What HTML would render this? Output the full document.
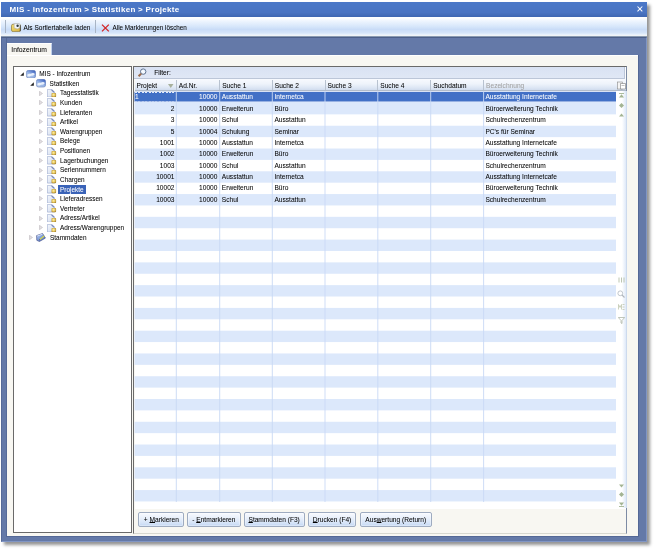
<!DOCTYPE html>
<html><head><meta charset="utf-8">
<style>
*{margin:0;padding:0;box-sizing:border-box}
html,body{width:656px;height:550px;overflow:hidden;background:#fff}
body{position:relative;font-family:"Liberation Sans",sans-serif;color:#000}
.a{position:absolute}
.t{position:absolute;white-space:nowrap;font-size:6.6px;line-height:8px;-webkit-text-stroke:0.04px currentColor}
#root{position:absolute;left:0;top:0;width:656px;height:550px;will-change:transform}
#win{position:absolute;left:1px;top:2px;width:646px;height:539.7px;box-shadow:3px 3px 3px rgba(0,0,0,.42);background:#6479a8}
</style></head><body><div id="root">

<svg width="0" height="0" style="position:absolute"><defs><linearGradient id="gp" x1="0" y1="0" x2="1" y2="1"><stop offset="0" stop-color="#f4f7fc"/><stop offset=".6" stop-color="#dfe6f3"/><stop offset="1" stop-color="#b9c6e0"/></linearGradient><radialGradient id="gy" cx=".45" cy=".45" r=".6"><stop offset="0" stop-color="#fff6b0"/><stop offset=".5" stop-color="#e8c860"/><stop offset="1" stop-color="#a88430"/></radialGradient><linearGradient id="gd" x1="0" y1="1" x2=".8" y2="0"><stop offset="0" stop-color="#c4d2ea"/><stop offset=".5" stop-color="#9ab6e6"/><stop offset="1" stop-color="#3c62c0"/></linearGradient><linearGradient id="gs" x1="0" y1="0" x2="1" y2="1"><stop offset="0" stop-color="#b8d0f4"/><stop offset="1" stop-color="#4a6ac0"/></linearGradient></defs></svg>
<div id="win"></div>
<div class="a" style="left:1px;top:37px;width:646px;height:504.7px;border:1px solid #566a98;border-right-color:#8196c4;border-bottom-color:#8196c4;border-top-color:#4d5f88"></div>
<div class="a" style="left:1px;top:2px;width:646px;height:15px;background:linear-gradient(#4b78c8,#4a74c2 70%,#3f67b2)"></div>
<div class="t" style="left:9.6px;top:4.8px;font-size:8px;font-weight:bold;color:#fff;line-height:10px;letter-spacing:0.3px;-webkit-text-stroke:0">MIS - Infozentrum &gt; Statistiken &gt; Projekte</div>
<svg class="a" style="left:636.6px;top:6.3px" width="6" height="6" viewBox="0 0 6 6"><path d="M0.5 0.5L5.3 5.3M5.3 0.5L0.5 5.3" stroke="#fff" stroke-width="1.05"/></svg>
<div class="a" style="left:1px;top:17px;width:646px;height:20px;background:linear-gradient(#ffffff 0,#ffffff 5%,#eef5fe 20%,#d9e8fb 45%,#c9dcf7 62%,#d6e5f9 80%,#e8f1fc 88%,#ffffff 92%,#a9b9c6 95%,#6a7c9e 100%)"></div>
<div class="a" style="left:5px;top:20px;width:1px;height:13px;background:#a8b4c4"></div>
<div class="a" style="left:95px;top:20px;width:1px;height:13px;background:#a8b4c4"></div>
<div class="t" style="left:23.6px;top:23.5px;font-size:6.5px">Als Sortiertabelle laden</div>
<div class="t" style="left:112.6px;top:23.5px;font-size:6.3px">Alle Markierungen löschen</div>
<svg class="a" style="left:11px;top:23px" width="10" height="9" viewBox="0 0 10 9"><defs><linearGradient id="ty" x1="0" y1="0" x2="1" y2="1"><stop offset="0" stop-color="#f6e27a"/><stop offset="1" stop-color="#d4b040"/></linearGradient></defs><rect x="0.5" y="1.2" width="9" height="7.4" rx="1.6" fill="url(#ty)" stroke="#8c7838" stroke-width=".7"/><path d="M3.2 0.6h4.2q1.8 0 1.8 1.8v2.2l-3 1.4-3-1.2z" fill="#f4f6f8" stroke="#a0a4a8" stroke-width=".5"/><circle cx="6.6" cy="2.7" r="1.2" fill="#2e3a3a"/><path d="M9.3 2.2v6" stroke="#3c3c3c" stroke-width=".8"/></svg>
<svg class="a" style="left:100.5px;top:24.3px" width="9" height="8" viewBox="0 0 9 8"><path d="M1 0.6L7.8 7.4M7.8 0.6L1 7.4" stroke="#d42424" stroke-width="1.3"/></svg>
<div class="a" style="left:6.5px;top:43.2px;width:45px;height:12px;background:#f8f7f2;border-top:1px solid #fff;border-right:1px solid #bfd0ec"></div>
<div class="t" style="left:11.3px;top:45.9px;font-size:6.75px">Infozentrum</div>
<div class="a" style="left:6.5px;top:54.8px;width:631.5px;height:481px;background:#f8f7f2;border-top:1px solid #fff"></div><div class="a" style="left:638px;top:55px;width:1px;height:481.5px;background:#546896"></div><div class="a" style="left:6px;top:535.8px;width:633px;height:1px;background:#546896"></div><div class="a" style="left:5.8px;top:38px;width:1px;height:498px;background:#566a98"></div>
<div class="a" style="left:13px;top:66px;width:119px;height:466.5px;background:#fff;border:1px solid #6a6a6a"></div>
<svg class="a" style="left:19.5px;top:72.4px" width="4" height="4" viewBox="0 0 4 4"><path d="M3.8 0.2V3.8H0.2z" fill="#222"/></svg>
<svg class="a" style="left:25.7px;top:69.60000000000001px" width="10" height="8.5" viewBox="0 0 10 8.5"><rect x="0.3" y="0.3" width="9.4" height="7.8" rx="2.4" fill="url(#gd)" stroke="#5270b0" stroke-width=".5"/><path d="M1.5 4.5c1.5-1.6 3-0.3 4.5-1.2 1-.6 1.8-.4 2.5.2v1.5c-1.5 1-3 .5-4.5 1.2-1 .4-2 .3-2.5-.2z" fill="#f2f7ff" opacity=".9"/></svg>
<div class="t" style="left:39.3px;top:70.0px;font-size:6.45px">MIS - Infozentrum</div>
<svg class="a" style="left:29.5px;top:82.03px" width="4" height="4" viewBox="0 0 4 4"><path d="M3.8 0.2V3.8H0.2z" fill="#222"/></svg>
<svg class="a" style="left:36.2px;top:79.23px" width="10" height="8.5" viewBox="0 0 10 8.5"><rect x="0.3" y="0.3" width="9.4" height="7.8" rx="2.4" fill="url(#gd)" stroke="#5270b0" stroke-width=".5"/><path d="M1.5 4.5c1.5-1.6 3-0.3 4.5-1.2 1-.6 1.8-.4 2.5.2v1.5c-1.5 1-3 .5-4.5 1.2-1 .4-2 .3-2.5-.2z" fill="#f2f7ff" opacity=".9"/></svg>
<div class="t" style="left:49.6px;top:79.63px;font-size:6.45px">Statistiken</div>
<svg class="a" style="left:39.300000000000004px;top:90.56000000000002px" width="4" height="5" viewBox="0 0 4 5"><path d="M0.5 0.3L3.5 2.5L0.5 4.7z" fill="#e4e0e4" stroke="#b4b0b4" stroke-width=".5"/></svg>
<svg class="a" style="left:47.2px;top:88.76px" width="10" height="8.5" viewBox="0 0 10 8.5"><path d="M0.4 0.4h4.6l2.6 2.6v5.1h-7.2z" fill="url(#gp)" stroke="#8fa0c8" stroke-width=".55"/><path d="M4.8 0.4l2.8 2.8-1 .4-2.2-2.2z" fill="#5060a0" opacity=".85"/><rect x="4.5" y="3.9" width="4.6" height="4.3" rx="1" fill="url(#gy)"/></svg>
<div class="t" style="left:60px;top:89.26px;font-size:6.45px">Tagesstatistik</div>
<svg class="a" style="left:39.300000000000004px;top:100.19000000000001px" width="4" height="5" viewBox="0 0 4 5"><path d="M0.5 0.3L3.5 2.5L0.5 4.7z" fill="#e4e0e4" stroke="#b4b0b4" stroke-width=".5"/></svg>
<svg class="a" style="left:47.2px;top:98.39px" width="10" height="8.5" viewBox="0 0 10 8.5"><path d="M0.4 0.4h4.6l2.6 2.6v5.1h-7.2z" fill="url(#gp)" stroke="#8fa0c8" stroke-width=".55"/><path d="M4.8 0.4l2.8 2.8-1 .4-2.2-2.2z" fill="#5060a0" opacity=".85"/><rect x="4.5" y="3.9" width="4.6" height="4.3" rx="1" fill="url(#gy)"/></svg>
<div class="t" style="left:60px;top:98.89px;font-size:6.45px">Kunden</div>
<svg class="a" style="left:39.300000000000004px;top:109.82000000000002px" width="4" height="5" viewBox="0 0 4 5"><path d="M0.5 0.3L3.5 2.5L0.5 4.7z" fill="#e4e0e4" stroke="#b4b0b4" stroke-width=".5"/></svg>
<svg class="a" style="left:47.2px;top:108.02000000000001px" width="10" height="8.5" viewBox="0 0 10 8.5"><path d="M0.4 0.4h4.6l2.6 2.6v5.1h-7.2z" fill="url(#gp)" stroke="#8fa0c8" stroke-width=".55"/><path d="M4.8 0.4l2.8 2.8-1 .4-2.2-2.2z" fill="#5060a0" opacity=".85"/><rect x="4.5" y="3.9" width="4.6" height="4.3" rx="1" fill="url(#gy)"/></svg>
<div class="t" style="left:60px;top:108.52000000000001px;font-size:6.45px">Lieferanten</div>
<svg class="a" style="left:39.300000000000004px;top:119.45000000000002px" width="4" height="5" viewBox="0 0 4 5"><path d="M0.5 0.3L3.5 2.5L0.5 4.7z" fill="#e4e0e4" stroke="#b4b0b4" stroke-width=".5"/></svg>
<svg class="a" style="left:47.2px;top:117.65px" width="10" height="8.5" viewBox="0 0 10 8.5"><path d="M0.4 0.4h4.6l2.6 2.6v5.1h-7.2z" fill="url(#gp)" stroke="#8fa0c8" stroke-width=".55"/><path d="M4.8 0.4l2.8 2.8-1 .4-2.2-2.2z" fill="#5060a0" opacity=".85"/><rect x="4.5" y="3.9" width="4.6" height="4.3" rx="1" fill="url(#gy)"/></svg>
<div class="t" style="left:60px;top:118.15px;font-size:6.45px">Artikel</div>
<svg class="a" style="left:39.300000000000004px;top:129.08px" width="4" height="5" viewBox="0 0 4 5"><path d="M0.5 0.3L3.5 2.5L0.5 4.7z" fill="#e4e0e4" stroke="#b4b0b4" stroke-width=".5"/></svg>
<svg class="a" style="left:47.2px;top:127.28px" width="10" height="8.5" viewBox="0 0 10 8.5"><path d="M0.4 0.4h4.6l2.6 2.6v5.1h-7.2z" fill="url(#gp)" stroke="#8fa0c8" stroke-width=".55"/><path d="M4.8 0.4l2.8 2.8-1 .4-2.2-2.2z" fill="#5060a0" opacity=".85"/><rect x="4.5" y="3.9" width="4.6" height="4.3" rx="1" fill="url(#gy)"/></svg>
<div class="t" style="left:60px;top:127.78px;font-size:6.45px">Warengruppen</div>
<svg class="a" style="left:39.300000000000004px;top:138.71px" width="4" height="5" viewBox="0 0 4 5"><path d="M0.5 0.3L3.5 2.5L0.5 4.7z" fill="#e4e0e4" stroke="#b4b0b4" stroke-width=".5"/></svg>
<svg class="a" style="left:47.2px;top:136.91px" width="10" height="8.5" viewBox="0 0 10 8.5"><path d="M0.4 0.4h4.6l2.6 2.6v5.1h-7.2z" fill="url(#gp)" stroke="#8fa0c8" stroke-width=".55"/><path d="M4.8 0.4l2.8 2.8-1 .4-2.2-2.2z" fill="#5060a0" opacity=".85"/><rect x="4.5" y="3.9" width="4.6" height="4.3" rx="1" fill="url(#gy)"/></svg>
<div class="t" style="left:60px;top:137.41px;font-size:6.45px">Belege</div>
<svg class="a" style="left:39.300000000000004px;top:148.34px" width="4" height="5" viewBox="0 0 4 5"><path d="M0.5 0.3L3.5 2.5L0.5 4.7z" fill="#e4e0e4" stroke="#b4b0b4" stroke-width=".5"/></svg>
<svg class="a" style="left:47.2px;top:146.54px" width="10" height="8.5" viewBox="0 0 10 8.5"><path d="M0.4 0.4h4.6l2.6 2.6v5.1h-7.2z" fill="url(#gp)" stroke="#8fa0c8" stroke-width=".55"/><path d="M4.8 0.4l2.8 2.8-1 .4-2.2-2.2z" fill="#5060a0" opacity=".85"/><rect x="4.5" y="3.9" width="4.6" height="4.3" rx="1" fill="url(#gy)"/></svg>
<div class="t" style="left:60px;top:147.04px;font-size:6.45px">Positionen</div>
<svg class="a" style="left:39.300000000000004px;top:157.97px" width="4" height="5" viewBox="0 0 4 5"><path d="M0.5 0.3L3.5 2.5L0.5 4.7z" fill="#e4e0e4" stroke="#b4b0b4" stroke-width=".5"/></svg>
<svg class="a" style="left:47.2px;top:156.17px" width="10" height="8.5" viewBox="0 0 10 8.5"><path d="M0.4 0.4h4.6l2.6 2.6v5.1h-7.2z" fill="url(#gp)" stroke="#8fa0c8" stroke-width=".55"/><path d="M4.8 0.4l2.8 2.8-1 .4-2.2-2.2z" fill="#5060a0" opacity=".85"/><rect x="4.5" y="3.9" width="4.6" height="4.3" rx="1" fill="url(#gy)"/></svg>
<div class="t" style="left:60px;top:156.67px;font-size:6.45px">Lagerbuchungen</div>
<svg class="a" style="left:39.300000000000004px;top:167.60000000000002px" width="4" height="5" viewBox="0 0 4 5"><path d="M0.5 0.3L3.5 2.5L0.5 4.7z" fill="#e4e0e4" stroke="#b4b0b4" stroke-width=".5"/></svg>
<svg class="a" style="left:47.2px;top:165.8px" width="10" height="8.5" viewBox="0 0 10 8.5"><path d="M0.4 0.4h4.6l2.6 2.6v5.1h-7.2z" fill="url(#gp)" stroke="#8fa0c8" stroke-width=".55"/><path d="M4.8 0.4l2.8 2.8-1 .4-2.2-2.2z" fill="#5060a0" opacity=".85"/><rect x="4.5" y="3.9" width="4.6" height="4.3" rx="1" fill="url(#gy)"/></svg>
<div class="t" style="left:60px;top:166.3px;font-size:6.45px">Seriennummern</div>
<svg class="a" style="left:39.300000000000004px;top:177.23000000000002px" width="4" height="5" viewBox="0 0 4 5"><path d="M0.5 0.3L3.5 2.5L0.5 4.7z" fill="#e4e0e4" stroke="#b4b0b4" stroke-width=".5"/></svg>
<svg class="a" style="left:47.2px;top:175.43px" width="10" height="8.5" viewBox="0 0 10 8.5"><path d="M0.4 0.4h4.6l2.6 2.6v5.1h-7.2z" fill="url(#gp)" stroke="#8fa0c8" stroke-width=".55"/><path d="M4.8 0.4l2.8 2.8-1 .4-2.2-2.2z" fill="#5060a0" opacity=".85"/><rect x="4.5" y="3.9" width="4.6" height="4.3" rx="1" fill="url(#gy)"/></svg>
<div class="t" style="left:60px;top:175.93px;font-size:6.45px">Chargen</div>
<svg class="a" style="left:39.300000000000004px;top:186.86px" width="4" height="5" viewBox="0 0 4 5"><path d="M0.5 0.3L3.5 2.5L0.5 4.7z" fill="#e4e0e4" stroke="#b4b0b4" stroke-width=".5"/></svg>
<svg class="a" style="left:47.2px;top:185.06px" width="10" height="8.5" viewBox="0 0 10 8.5"><path d="M0.4 0.4h4.6l2.6 2.6v5.1h-7.2z" fill="url(#gp)" stroke="#8fa0c8" stroke-width=".55"/><path d="M4.8 0.4l2.8 2.8-1 .4-2.2-2.2z" fill="#5060a0" opacity=".85"/><rect x="4.5" y="3.9" width="4.6" height="4.3" rx="1" fill="url(#gy)"/></svg>
<div class="a" style="left:58.3px;top:185.3px;width:27.5px;height:8.5px;background:#3a63b8"></div>
<div class="t" style="left:60px;top:185.56px;color:#fff;font-size:6.45px">Projekte</div>
<svg class="a" style="left:39.300000000000004px;top:196.49000000000004px" width="4" height="5" viewBox="0 0 4 5"><path d="M0.5 0.3L3.5 2.5L0.5 4.7z" fill="#e4e0e4" stroke="#b4b0b4" stroke-width=".5"/></svg>
<svg class="a" style="left:47.2px;top:194.69000000000003px" width="10" height="8.5" viewBox="0 0 10 8.5"><path d="M0.4 0.4h4.6l2.6 2.6v5.1h-7.2z" fill="url(#gp)" stroke="#8fa0c8" stroke-width=".55"/><path d="M4.8 0.4l2.8 2.8-1 .4-2.2-2.2z" fill="#5060a0" opacity=".85"/><rect x="4.5" y="3.9" width="4.6" height="4.3" rx="1" fill="url(#gy)"/></svg>
<div class="t" style="left:60px;top:195.19000000000003px;font-size:6.45px">Lieferadressen</div>
<svg class="a" style="left:39.300000000000004px;top:206.12000000000003px" width="4" height="5" viewBox="0 0 4 5"><path d="M0.5 0.3L3.5 2.5L0.5 4.7z" fill="#e4e0e4" stroke="#b4b0b4" stroke-width=".5"/></svg>
<svg class="a" style="left:47.2px;top:204.32000000000002px" width="10" height="8.5" viewBox="0 0 10 8.5"><path d="M0.4 0.4h4.6l2.6 2.6v5.1h-7.2z" fill="url(#gp)" stroke="#8fa0c8" stroke-width=".55"/><path d="M4.8 0.4l2.8 2.8-1 .4-2.2-2.2z" fill="#5060a0" opacity=".85"/><rect x="4.5" y="3.9" width="4.6" height="4.3" rx="1" fill="url(#gy)"/></svg>
<div class="t" style="left:60px;top:204.82000000000002px;font-size:6.45px">Vertreter</div>
<svg class="a" style="left:39.300000000000004px;top:215.75000000000003px" width="4" height="5" viewBox="0 0 4 5"><path d="M0.5 0.3L3.5 2.5L0.5 4.7z" fill="#e4e0e4" stroke="#b4b0b4" stroke-width=".5"/></svg>
<svg class="a" style="left:47.2px;top:213.95000000000002px" width="10" height="8.5" viewBox="0 0 10 8.5"><path d="M0.4 0.4h4.6l2.6 2.6v5.1h-7.2z" fill="url(#gp)" stroke="#8fa0c8" stroke-width=".55"/><path d="M4.8 0.4l2.8 2.8-1 .4-2.2-2.2z" fill="#5060a0" opacity=".85"/><rect x="4.5" y="3.9" width="4.6" height="4.3" rx="1" fill="url(#gy)"/></svg>
<div class="t" style="left:60px;top:214.45000000000002px;font-size:6.45px">Adress/Artikel</div>
<svg class="a" style="left:39.300000000000004px;top:225.38000000000002px" width="4" height="5" viewBox="0 0 4 5"><path d="M0.5 0.3L3.5 2.5L0.5 4.7z" fill="#e4e0e4" stroke="#b4b0b4" stroke-width=".5"/></svg>
<svg class="a" style="left:47.2px;top:223.58px" width="10" height="8.5" viewBox="0 0 10 8.5"><path d="M0.4 0.4h4.6l2.6 2.6v5.1h-7.2z" fill="url(#gp)" stroke="#8fa0c8" stroke-width=".55"/><path d="M4.8 0.4l2.8 2.8-1 .4-2.2-2.2z" fill="#5060a0" opacity=".85"/><rect x="4.5" y="3.9" width="4.6" height="4.3" rx="1" fill="url(#gy)"/></svg>
<div class="t" style="left:60px;top:224.08px;font-size:6.45px">Adress/Warengruppen</div>
<svg class="a" style="left:29.2px;top:235.01000000000002px" width="4" height="5" viewBox="0 0 4 5"><path d="M0.5 0.3L3.5 2.5L0.5 4.7z" fill="#e4e0e4" stroke="#b4b0b4" stroke-width=".5"/></svg>
<svg class="a" style="left:36.4px;top:233.01000000000002px" width="10" height="9" viewBox="0 0 10 9"><path d="M0.6 2.6l6-2.1 2.8 4.6-6 3.4-2.6-1.2z" fill="url(#gs)" stroke="#33407a" stroke-width=".6"/><path d="M1.2 3l5.3-1.8" stroke="#e8f0ff" stroke-width=".8"/><path d="M3.6 6.6l4.6-3.6" stroke="#d8d840" stroke-width="1.2"/><path d="M3.2 7l.8-.4" stroke="#303868" stroke-width=".9"/></svg>
<div class="t" style="left:50px;top:233.71px;font-size:6.45px">Stammdaten</div>
<div class="a" style="left:133px;top:66px;width:494px;height:468px;background:#f8f7f2;border:1px solid #6a6a6a;border-right-color:#7d8ba4;border-bottom-color:#d8d8d0"></div>
<div class="a" style="left:134px;top:67px;width:492px;height:12px;background:#fbfcfe"></div><div class="a" style="left:134px;top:67px;width:490.5px;height:11.5px;background:linear-gradient(#d9e2f3,#e0e7f5);border:1px solid #bcc6d8;border-top:0;border-left:0"></div>
<svg class="a" style="left:136.5px;top:68.3px" width="10" height="9" viewBox="0 0 10 9"><circle cx="6.2" cy="3.6" r="2.7" fill="#f6fbff" stroke="#5d6f8c" stroke-width="1"/><path d="M7 1.5a2 2 0 0 1 1 2" stroke="#a8c8e8" stroke-width=".6" fill="none"/><path d="M4.2 5.6L1.6 8.2" stroke="#9a6a48" stroke-width="2"/></svg>
<div class="t" style="left:154.3px;top:68.8px">Filter:</div>
<div class="a" style="left:134.5px;top:78.5px;width:491.5px;height:12.5px;background:linear-gradient(#f8fafe,#eef3fb 45%,#dde6f4 80%,#d0dcee);border-bottom:1px solid #b2bccb"></div>
<div class="t" style="left:136.5px;top:81.8px;color:#000">Projekt</div>
<div class="a" style="left:175.8px;top:80px;width:1px;height:10px;background:#b8c2d0"></div>
<div class="t" style="left:178.8px;top:81.8px;color:#000">Ad.Nr.</div>
<div class="a" style="left:219.2px;top:80px;width:1px;height:10px;background:#b8c2d0"></div>
<div class="t" style="left:222.2px;top:81.8px;color:#000">Suche 1</div>
<div class="a" style="left:271.8px;top:80px;width:1px;height:10px;background:#b8c2d0"></div>
<div class="t" style="left:274.8px;top:81.8px;color:#000">Suche 2</div>
<div class="a" style="left:324.5px;top:80px;width:1px;height:10px;background:#b8c2d0"></div>
<div class="t" style="left:327.5px;top:81.8px;color:#000">Suche 3</div>
<div class="a" style="left:377.3px;top:80px;width:1px;height:10px;background:#b8c2d0"></div>
<div class="t" style="left:380.3px;top:81.8px;color:#000">Suche 4</div>
<div class="a" style="left:430.2px;top:80px;width:1px;height:10px;background:#b8c2d0"></div>
<div class="t" style="left:433.2px;top:81.8px;color:#000">Suchdatum</div>
<div class="a" style="left:483.1px;top:80px;width:1px;height:10px;background:#b8c2d0"></div>
<div class="t" style="left:486.1px;top:81.8px;color:#a0a0a0">Bezeichnung</div>
<svg class="a" style="left:168px;top:84.2px" width="5.5" height="4" viewBox="0 0 5.5 4"><path d="M0 0h5.5L2.75 4z" fill="#a7b09c"/></svg>
<svg class="a" style="left:616.8px;top:81px" width="9" height="9" viewBox="0 0 9 9"><rect x="0.4" y="1" width="5" height="7" fill="#f4f4f4" stroke="#8a8a8a" stroke-width=".6"/><path d="M3.5 2.5h5v5.5h-5z" fill="#fff" stroke="#7a7a7a" stroke-width=".6"/><path d="M4.5 4.5h3" stroke="#999" stroke-width=".6"/></svg>
<div class="a" style="left:134.5px;top:91px;width:491.5px;height:417.5px;background:#fff"></div>
<svg class="a" style="left:0;top:0" width="656" height="550" viewBox="0 0 656 550"><rect x="134.5" y="91.80" width="481.5" height="9.90" fill="#4270c6"/><rect x="134.5" y="101.70" width="481.5" height="12.67" fill="#dce8fb"/><rect x="134.5" y="125.75" width="481.5" height="11.38" fill="#dce8fb"/><rect x="134.5" y="148.52" width="481.5" height="11.38" fill="#dce8fb"/><rect x="134.5" y="171.29" width="481.5" height="11.38" fill="#dce8fb"/><rect x="134.5" y="194.06" width="481.5" height="11.38" fill="#dce8fb"/><rect x="134.5" y="216.83" width="481.5" height="11.38" fill="#dce8fb"/><rect x="134.5" y="239.60" width="481.5" height="11.38" fill="#dce8fb"/><rect x="134.5" y="262.38" width="481.5" height="11.38" fill="#dce8fb"/><rect x="134.5" y="285.14" width="481.5" height="11.38" fill="#dce8fb"/><rect x="134.5" y="307.91" width="481.5" height="11.38" fill="#dce8fb"/><rect x="134.5" y="330.69" width="481.5" height="11.38" fill="#dce8fb"/><rect x="134.5" y="353.46" width="481.5" height="11.38" fill="#dce8fb"/><rect x="134.5" y="376.23" width="481.5" height="11.38" fill="#dce8fb"/><rect x="134.5" y="399.00" width="481.5" height="11.38" fill="#dce8fb"/><rect x="134.5" y="421.76" width="481.5" height="11.38" fill="#dce8fb"/><rect x="134.5" y="444.53" width="481.5" height="11.38" fill="#dce8fb"/><rect x="134.5" y="467.30" width="481.5" height="11.38" fill="#dce8fb"/><rect x="134.5" y="490.07" width="481.5" height="11.38" fill="#dce8fb"/><rect x="175.8" y="91" width="1" height="411" fill="#c9d9f5" opacity=".9"/><rect x="219.2" y="91" width="1" height="411" fill="#c9d9f5" opacity=".9"/><rect x="271.8" y="91" width="1" height="411" fill="#c9d9f5" opacity=".9"/><rect x="324.5" y="91" width="1" height="411" fill="#c9d9f5" opacity=".9"/><rect x="377.3" y="91" width="1" height="411" fill="#c9d9f5" opacity=".9"/><rect x="430.2" y="91" width="1" height="411" fill="#c9d9f5" opacity=".9"/><rect x="483.1" y="91" width="1" height="411" fill="#c9d9f5" opacity=".9"/></svg>
<div class="t" style="left:176.3px;width:41.09999999999998px;text-align:right;top:93.40px;color:#fff">10000</div>
<div class="t" style="left:221.79999999999998px;top:93.40px;color:#fff">Ausstattun</div>
<div class="t" style="left:274.40000000000003px;top:93.40px;color:#fff">Internetca</div>
<div class="t" style="left:485.40000000000003px;top:93.40px;color:#fff">Ausstattung Internetcafe</div>
<div class="t" style="left:134px;width:40.500000000000014px;text-align:right;top:104.78px;color:#000">2</div>
<div class="t" style="left:176.3px;width:41.09999999999998px;text-align:right;top:104.78px;color:#000">10000</div>
<div class="t" style="left:221.79999999999998px;top:104.78px;color:#000">Erweiterun</div>
<div class="t" style="left:274.40000000000003px;top:104.78px;color:#000">Büro</div>
<div class="t" style="left:485.40000000000003px;top:104.78px;color:#000">Büroerweiterung Technik</div>
<div class="t" style="left:134px;width:40.500000000000014px;text-align:right;top:116.17px;color:#000">3</div>
<div class="t" style="left:176.3px;width:41.09999999999998px;text-align:right;top:116.17px;color:#000">10000</div>
<div class="t" style="left:221.79999999999998px;top:116.17px;color:#000">Schul</div>
<div class="t" style="left:274.40000000000003px;top:116.17px;color:#000">Ausstattun</div>
<div class="t" style="left:485.40000000000003px;top:116.17px;color:#000">Schulrechenzentrum</div>
<div class="t" style="left:134px;width:40.500000000000014px;text-align:right;top:127.55px;color:#000">5</div>
<div class="t" style="left:176.3px;width:41.09999999999998px;text-align:right;top:127.55px;color:#000">10004</div>
<div class="t" style="left:221.79999999999998px;top:127.55px;color:#000">Schulung</div>
<div class="t" style="left:274.40000000000003px;top:127.55px;color:#000">Seminar</div>
<div class="t" style="left:485.40000000000003px;top:127.55px;color:#000">PC's für Seminar</div>
<div class="t" style="left:134px;width:40.500000000000014px;text-align:right;top:138.94px;color:#000">1001</div>
<div class="t" style="left:176.3px;width:41.09999999999998px;text-align:right;top:138.94px;color:#000">10000</div>
<div class="t" style="left:221.79999999999998px;top:138.94px;color:#000">Ausstattun</div>
<div class="t" style="left:274.40000000000003px;top:138.94px;color:#000">Internetca</div>
<div class="t" style="left:485.40000000000003px;top:138.94px;color:#000">Ausstattung Internetcafe</div>
<div class="t" style="left:134px;width:40.500000000000014px;text-align:right;top:150.32px;color:#000">1002</div>
<div class="t" style="left:176.3px;width:41.09999999999998px;text-align:right;top:150.32px;color:#000">10000</div>
<div class="t" style="left:221.79999999999998px;top:150.32px;color:#000">Erweiterun</div>
<div class="t" style="left:274.40000000000003px;top:150.32px;color:#000">Büro</div>
<div class="t" style="left:485.40000000000003px;top:150.32px;color:#000">Büroerweiterung Technik</div>
<div class="t" style="left:134px;width:40.500000000000014px;text-align:right;top:161.71px;color:#000">1003</div>
<div class="t" style="left:176.3px;width:41.09999999999998px;text-align:right;top:161.71px;color:#000">10000</div>
<div class="t" style="left:221.79999999999998px;top:161.71px;color:#000">Schul</div>
<div class="t" style="left:274.40000000000003px;top:161.71px;color:#000">Ausstattun</div>
<div class="t" style="left:485.40000000000003px;top:161.71px;color:#000">Schulrechenzentrum</div>
<div class="t" style="left:134px;width:40.500000000000014px;text-align:right;top:173.09px;color:#000">10001</div>
<div class="t" style="left:176.3px;width:41.09999999999998px;text-align:right;top:173.09px;color:#000">10000</div>
<div class="t" style="left:221.79999999999998px;top:173.09px;color:#000">Ausstattun</div>
<div class="t" style="left:274.40000000000003px;top:173.09px;color:#000">Internetca</div>
<div class="t" style="left:485.40000000000003px;top:173.09px;color:#000">Ausstattung Internetcafe</div>
<div class="t" style="left:134px;width:40.500000000000014px;text-align:right;top:184.48px;color:#000">10002</div>
<div class="t" style="left:176.3px;width:41.09999999999998px;text-align:right;top:184.48px;color:#000">10000</div>
<div class="t" style="left:221.79999999999998px;top:184.48px;color:#000">Erweiterun</div>
<div class="t" style="left:274.40000000000003px;top:184.48px;color:#000">Büro</div>
<div class="t" style="left:485.40000000000003px;top:184.48px;color:#000">Büroerweiterung Technik</div>
<div class="t" style="left:134px;width:40.500000000000014px;text-align:right;top:195.87px;color:#000">10003</div>
<div class="t" style="left:176.3px;width:41.09999999999998px;text-align:right;top:195.87px;color:#000">10000</div>
<div class="t" style="left:221.79999999999998px;top:195.87px;color:#000">Schul</div>
<div class="t" style="left:274.40000000000003px;top:195.87px;color:#000">Ausstattun</div>
<div class="t" style="left:485.40000000000003px;top:195.87px;color:#000">Schulrechenzentrum</div>
<div class="a" style="left:134.5px;top:91.8px;width:41.5px;height:1px;background:repeating-linear-gradient(90deg,rgba(255,255,255,.85) 0 2px,transparent 2px 3.4px)"></div><div class="a" style="left:134.5px;top:100.8px;width:41.5px;height:1px;background:repeating-linear-gradient(90deg,rgba(255,255,255,.3) 0 2px,transparent 2px 3.4px)"></div>
<div class="t" style="left:135px;top:93.30px;color:#fff">1</div>
<div class="a" style="left:621.5px;top:91px;width:5px;height:417px;background:linear-gradient(90deg,rgba(216,228,246,0),#d6e3f6)"></div>
<svg class="a" style="left:618.5px;top:93.2px" width="5" height="5" viewBox="0 0 5 5"><path d="M0 .5h5" stroke="#a3b493" stroke-width=".9"/><path d="M2.5 1.2L5 4.5H0z" fill="#a3b493"/></svg>
<svg class="a" style="left:618.5px;top:102.6px" width="5" height="5" viewBox="0 0 5 5"><path d="M2.5 0L5 2.5 2.5 5 0 2.5z" fill="#a3b493"/></svg>
<svg class="a" style="left:618.5px;top:112.5px" width="5" height="4" viewBox="0 0 5 4"><path d="M2.5 .5L5 3.5H0z" fill="#a3b493"/></svg>
<svg class="a" style="left:618.5px;top:483.5px" width="5" height="4" viewBox="0 0 5 4"><path d="M2.5 3.5L5 .5H0z" fill="#a3b493"/></svg>
<svg class="a" style="left:618.5px;top:492.2px" width="5" height="5" viewBox="0 0 5 5"><path d="M2.5 0L5 2.5 2.5 5 0 2.5z" fill="#a3b493"/></svg>
<svg class="a" style="left:618.5px;top:501.5px" width="5" height="5" viewBox="0 0 5 5"><path d="M0 4.5h5" stroke="#a3b493" stroke-width=".9"/><path d="M2.5 3.8L5 .5H0z" fill="#a3b493"/></svg>
<svg class="a" style="left:617.5px;top:276.5px" width="7" height="6" viewBox="0 0 7 6"><path d="M1 .5v5M3.5 .5v5M6 .5v5" stroke="#b5c0a8" stroke-width=".9"/></svg>
<svg class="a" style="left:617px;top:289.5px" width="8" height="8" viewBox="0 0 8 8"><circle cx="3.3" cy="3.3" r="2.4" fill="none" stroke="#b9c0c6" stroke-width=".9"/><path d="M5 5l2.5 2.5" stroke="#b0b6bc" stroke-width="1.1"/></svg>
<svg class="a" style="left:617.5px;top:304px" width="7" height="6" viewBox="0 0 7 6"><path d="M.5 5.5v-5l1.5 3 1.5-3v5M4.5 .5h2M4.5 3h2M4.5 5.5h2" stroke="#c0c8b0" stroke-width=".8" fill="none"/></svg>
<svg class="a" style="left:617.5px;top:316.5px" width="7" height="7" viewBox="0 0 7 7"><path d="M.3 .5h6.4L4 3.5v3L3 6V3.5z" fill="none" stroke="#b0b8a8" stroke-width=".8"/></svg>
<div class="a" style="left:138.2px;top:512.4px;width:46.30000000000001px;height:14.2px;border:1px solid #9eabc0;border-radius:2px;background:linear-gradient(#f8faff,#e6eefa 45%,#d3e2f7 80%,#c2d6f3);box-shadow:inset 0 0 0 .5px rgba(255,255,255,.7);"><div class="t" style="left:0;right:0;top:2.7px;text-align:center;text-decoration-thickness:0.5px;text-underline-offset:0.3px;text-decoration-color:#777">+ <u>M</u>arkieren</div></div>
<div class="a" style="left:187px;top:512.4px;width:53.69999999999999px;height:14.2px;border:1px solid #9eabc0;border-radius:2px;background:linear-gradient(#f8faff,#e6eefa 45%,#d3e2f7 80%,#c2d6f3);box-shadow:inset 0 0 0 .5px rgba(255,255,255,.7);"><div class="t" style="left:0;right:0;top:2.7px;text-align:center;text-decoration-thickness:0.5px;text-underline-offset:0.3px;text-decoration-color:#777">- <u>E</u>ntmarkieren</div></div>
<div class="a" style="left:243.7px;top:512.4px;width:60.900000000000034px;height:14.2px;border:1px solid #9eabc0;border-radius:2px;background:linear-gradient(#f8faff,#e6eefa 45%,#d3e2f7 80%,#c2d6f3);box-shadow:inset 0 0 0 .5px rgba(255,255,255,.7);"><div class="t" style="left:0;right:0;top:2.7px;text-align:center;text-decoration-thickness:0.5px;text-underline-offset:0.3px;text-decoration-color:#777"><u>S</u>tammdaten (F3)</div></div>
<div class="a" style="left:307.7px;top:512.4px;width:48.80000000000001px;height:14.2px;border:1px solid #9eabc0;border-radius:2px;background:linear-gradient(#f8faff,#e6eefa 45%,#d3e2f7 80%,#c2d6f3);box-shadow:inset 0 0 0 .5px rgba(255,255,255,.7);"><div class="t" style="left:0;right:0;top:2.7px;text-align:center;text-decoration-thickness:0.5px;text-underline-offset:0.3px;text-decoration-color:#777"><u>D</u>rucken (F4)</div></div>
<div class="a" style="left:359.5px;top:512.4px;width:72.5px;height:14.2px;border:1px solid #9eabc0;border-radius:2px;background:linear-gradient(#f8faff,#e6eefa 45%,#d3e2f7 80%,#c2d6f3);box-shadow:inset 0 0 0 .5px rgba(255,255,255,.7);"><div class="t" style="left:0;right:0;top:2.7px;text-align:center;text-decoration-thickness:0.5px;text-underline-offset:0.3px;text-decoration-color:#777">Aus<u>w</u>ertung (Return)</div></div>
</div></body></html>
